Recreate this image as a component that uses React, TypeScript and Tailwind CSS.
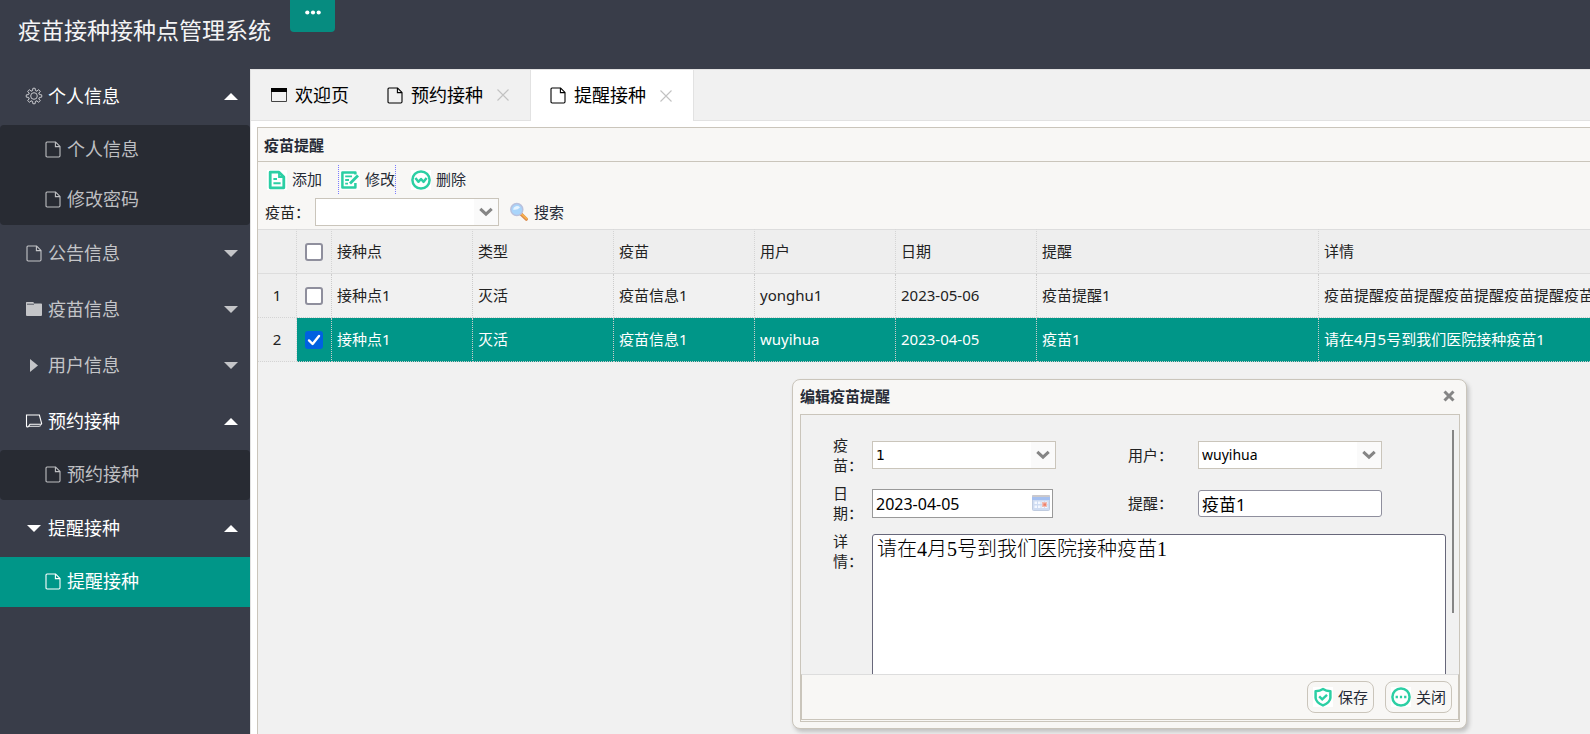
import { useState } from "react";
import type { ReactNode } from "react";

type IconProps = { className?: string };

function FileIcon({ className = "" }: IconProps) {
  return (
    <svg viewBox="0 0 16 17" className={`h-[17px] w-4 ${className}`} fill="none" stroke="currentColor" strokeWidth="1.1" aria-hidden="true">
      <path d="M1 2Q1 1 2 1H10.6L15 5.4V14.8Q15 16 13.8 16H2.2Q1 16 1 14.8Z" />
      <path d="M10.4 1V5.6H15" />
    </svg>
  );
}

function GearIcon() {
  const teeth = Array.from({ length: 8 }, (_, i) => i * 45);
  return (
    <svg viewBox="0 0 18 18" className="h-[18px] w-[18px]" fill="none" stroke="#d6d7da" strokeWidth=".9" aria-hidden="true">
      <circle cx="9" cy="9" r="3.3" />
      {teeth.map((deg) => (
        <path key={deg} d="M6.7 3.9L7.6 3.6L7.8 1.4Q9 .9 10.2 1.4L10.4 3.6L11.3 3.9" transform={`rotate(${deg} 9 9)`} />
      ))}
    </svg>
  );
}

function FolderIcon() {
  return (
    <svg viewBox="0 0 18 16" className="h-4 w-[18px]" fill="currentColor" aria-hidden="true">
      <path d="M1 1.6Q1 1 1.7 1H8Q8.6 1 8.8 1.6L9 2.4H16.2Q17 2.4 17 3.2V14Q17 15 16 15H2Q1 15 1 14Z" />
      <path d="M2 3.2H9" stroke="#393d49" strokeWidth=".8" />
    </svg>
  );
}

function ReadIcon() {
  return (
    <svg viewBox="0 0 18 16" className="h-4 w-[18px]" fill="none" stroke="currentColor" strokeWidth="1.1" aria-hidden="true">
      <path d="M1.5 13V2H14.4L16.6 10.4Q16.8 11.2 15.8 11.2H5L3.6 13.4Q1.5 14.6 1.5 13" />
      <path d="M3.8 13.4H13.8Q15.4 13.4 15.8 11.6" strokeOpacity=".7" />
    </svg>
  );
}

function Caret({ dir, className = "" }: { dir: "up" | "down" | "right"; className?: string }) {
  const shapes = { up: "M0 7L7 0L14 7Z", down: "M0 0H14L7 7Z", right: "M3 -3V10L11 3.5Z" };
  return (
    <svg viewBox="0 0 14 7" className={`h-[7px] w-[14px] overflow-visible ${className}`} fill="currentColor" aria-hidden="true">
      <path d={shapes[dir]} />
    </svg>
  );
}

function WindowIcon() {
  return (
    <svg viewBox="0 0 18 16" className="h-4 w-[18px]" aria-hidden="true">
      <path d="M1.5 1.5H16.5V14.5H1.5Z" fill="none" stroke="#444" />
      <path d="M1 1H17V5H1Z" fill="#000" />
    </svg>
  );
}

function Chevron() {
  return (
    <svg viewBox="0 0 14 10" className="h-[10px] w-[14px]" fill="none" stroke="#858585" strokeWidth="3" aria-hidden="true">
      <path d="M1.3 1.8L7 7.2L12.7 1.8" />
    </svg>
  );
}

function ActionIcon({ children }: { children: ReactNode }) {
  return (
    <svg viewBox="0 0 20 20" className="h-5 w-5 shrink-0 bg-white" fill="none" stroke="#2bcfa4" strokeWidth="2.5" aria-hidden="true">
      {children}
    </svg>
  );
}

const AddIcon = () => (
  <ActionIcon>
    <path d="M3.2 2.2H12L16.8 7V17.8H3.2Z" strokeLinejoin="round" strokeWidth="2.8" />
    <path d="M12 2.4V7H16.6" strokeWidth="1.8" />
    <path d="M6.4 9H10M6.4 13.2H13.6" strokeWidth="2" />
  </ActionIcon>
);
const EditIcon = () => (
  <ActionIcon>
    <path d="M15.4 4.6V2.4H2.4V17.6H15.4V13" strokeLinejoin="round" />
    <path d="M5.2 6.4H12M5.2 10H9M5.2 13.6H8" strokeWidth="1.8" />
    <path d="M10 13.6L18 5.6" strokeWidth="2.8" />
  </ActionIcon>
);
const DeleteIcon = () => (
  <ActionIcon>
    <circle cx="10" cy="10" r="8.6" />
    <path d="M4.4 8L7.4 11.8L10 9L12.6 11.8L15.6 8" strokeLinejoin="round" />
  </ActionIcon>
);
const SaveIcon = () => (
  <ActionIcon>
    <path d="M10 2Q13 4 17.4 4.3V11Q17 15.4 10 18.4Q3 15.4 2.6 11V4.3Q7 4 10 2Z" strokeLinejoin="round" />
    <path d="M6.2 9.4L9.2 12.4L14 7.8" strokeWidth="2.4" />
  </ActionIcon>
);
const CloseIcon = () => (
  <ActionIcon>
    <circle cx="10" cy="10" r="8.6" />
    <path d="M4.6 10H6.9M8.9 10H11.1M13.1 10H15.4" strokeWidth="2.3" />
  </ActionIcon>
);

function SearchIcon() {
  return (
    <svg viewBox="0 0 20 20" className="h-5 w-5" aria-hidden="true">
      <path d="M12 12L17.3 17.1" stroke="#d98a4e" strokeWidth="3.4" strokeLinecap="round" />
      <path d="M13 12.4L17.6 16.6" stroke="#f9b24c" strokeWidth="1.8" strokeLinecap="round" />
      <circle cx="7.8" cy="7.6" r="6" fill="#a9d5fb" stroke="#b9c1dd" strokeWidth="1.5" />
      <path d="M4 7.4A4 4 0 0 1 11 5.4Q8 8.4 4 7.4Z" fill="#e6f4ff" />
    </svg>
  );
}

function CalendarIcon() {
  return (
    <svg viewBox="0 0 18 16" className="h-4 w-[18px]" aria-hidden="true">
      <rect x=".5" y=".5" width="17" height="15" rx="1" fill="#cfdcf2" stroke="#c0cce0" />
      <path d="M0 1.5Q0 0 1.5 0H16.5Q18 0 18 1.5V5H0Z" fill="#a5c0f0" />
      <path d="M0 1.5Q0 0 1.5 0H16.5Q18 0 18 1.5V2H0Z" fill="#cbc9cc" />
      <path d="M2.5 6.5H5V9H2.5ZM6 6.5H8.5V9H6ZM9.5 6.5H12V9H9.5ZM13 6.5H15.5V9H13ZM2.5 10.5H5V13H2.5ZM6 10.5H8.5V13H6ZM9.5 10.5H12V13H9.5ZM13 10.5H15.5V13H13Z" fill="#f4f8ff" />
      <path d="M10 7H15V12H10Z" fill="#f0bcb4" />
      <path d="M11.4 8.4H14V10.8H11.4Z" fill="#ee8069" />
    </svg>
  );
}

type MenuItem = { label: string; icon: ReactNode; children?: string[] };

const menu: MenuItem[] = [
  { label: "个人信息", icon: <GearIcon />, children: ["个人信息", "修改密码"] },
  { label: "公告信息", icon: <FileIcon /> },
  { label: "疫苗信息", icon: <FolderIcon /> },
  { label: "用户信息", icon: <Caret dir="right" /> },
  { label: "预约接种", icon: <ReadIcon />, children: ["预约接种"] },
  { label: "提醒接种", icon: <Caret dir="down" />, children: ["提醒接种"] },
];

function Sidebar() {
  return (
    <nav className="w-[250px] shrink-0 bg-[#393d49] text-[18px]">
      {menu.map((item) => {
        const open = Boolean(item.children);
        return (
          <div key={item.label} className={open ? "mb-px" : ""}>
            <button
              type="button"
              aria-expanded={open}
              className={`flex h-14 w-full items-center pr-3 pb-0.5 pl-[25px] ${open ? "text-white" : "text-[#c4c5c8]"}`}
            >
              <span className="mr-[5px] flex w-[18px] justify-center">{item.icon}</span>
              {item.label}
              <Caret dir={open ? "up" : "down"} className="ml-auto" />
            </button>
            {item.children && (
              <div className="rounded-sm bg-[#282b33]">
                {item.children.map((child) => (
                  <a
                    key={child}
                    href="#"
                    className={`flex h-[50px] items-center gap-1.5 pb-0.5 pl-[45px] ${
                      child === "提醒接种" ? "bg-[#009688] text-white" : "text-[#bebfc2]"
                    }`}
                  >
                    <FileIcon />
                    {child}
                  </a>
                ))}
              </div>
            )}
          </div>
        );
      })}
    </nav>
  );
}

function TabClose() {
  return (
    <button type="button" aria-label="关闭标签" className="ml-3 p-0.5 text-[#c2c2c2]">
      <svg viewBox="0 0 12 12" className="h-3 w-3" stroke="currentColor" strokeWidth="1.1">
        <path d="M.5 .5L11.5 11.5M11.5 .5L.5 11.5" />
      </svg>
    </button>
  );
}

function Tabs() {
  return (
    <div className="flex h-13 border-t border-b border-[#e2e2e2] bg-[#f1f1f1] text-[18px] text-black">
      <div className="flex items-center gap-[7px] px-[19px]">
        <WindowIcon />
        欢迎页
      </div>
      <div className="flex items-center px-[19px]">
        <FileIcon className="mr-2" />
        预约接种
        <TabClose />
      </div>
      <div className="-mb-px flex items-center border-x border-[#e2e2e2] bg-white px-[19px]">
        <FileIcon className="mr-2" />
        提醒接种
        <TabClose />
      </div>
    </div>
  );
}

function Combo({ id, options, className = "" }: { id: string; options: string[]; className?: string }) {
  return (
    <span className="relative flex h-7 w-[184px] border border-[#cac5bb] bg-white">
      <select id={id} className={`w-full appearance-none bg-transparent pl-[3px] text-black outline-none ${className}`}>
        {options.map((o) => (
          <option key={o}>{o}</option>
        ))}
      </select>
      <span className="pointer-events-none absolute inset-y-0 right-0 flex w-6 items-center justify-center bg-[#fafafa]">
        <Chevron />
      </span>
    </span>
  );
}

const columns = ["接种点", "类型", "疫苗", "用户", "日期", "提醒", "详情"];
const rows = [
  ["接种点1", "灭活", "疫苗信息1", "yonghu1", "2023-05-06", "疫苗提醒1", "疫苗提醒疫苗提醒疫苗提醒疫苗提醒疫苗提醒疫苗提醒"],
  ["接种点1", "灭活", "疫苗信息1", "wuyihua", "2023-04-05", "疫苗1", "请在4月5号到我们医院接种疫苗1"],
];

function Tick({ label, checked, onChange }: { label: string; checked: boolean; onChange: () => void }) {
  return (
    <span className="relative mx-auto flex h-[18px] w-[18px]">
      <input
        type="checkbox"
        aria-label={label}
        checked={checked}
        onChange={onChange}
        className="h-[18px] w-[18px] appearance-none rounded-[3px] border-2 border-[#8f8f9d] bg-white checked:border-[#0061e0] checked:bg-[#0061e0]"
      />
      {checked && (
        <svg viewBox="0 0 18 18" className="pointer-events-none absolute inset-0 h-[18px] w-[18px]" fill="none" stroke="#fff" strokeWidth="2.4">
          <path d="M4 9.4L7.6 13L14 5" strokeLinecap="round" strokeLinejoin="round" />
        </svg>
      )}
    </span>
  );
}

function DataTable() {
  const [picked, setPicked] = useState<number[]>([1]);
  const toggle = (i: number) => setPicked((p) => (p.includes(i) ? p.filter((n) => n !== i) : [...p, i]));
  const all = picked.length === rows.length;
  return (
    <table className="w-full table-fixed border-separate border-spacing-0 text-[15px] text-[#222]">
      <colgroup>
        <col className="w-[39px]" />
        <col className="w-[35px]" />
        <col className="w-[141px]" />
        <col className="w-[141px]" />
        <col className="w-[141px]" />
        <col className="w-[141px]" />
        <col className="w-[141px]" />
        <col className="w-[282px]" />
        <col />
      </colgroup>
      <thead>
        <tr className="h-[45px] bg-[#eeeeee]">
          <th className="border-y border-y-[#dddddd] border-r border-r-[#d4d4d4] [border-right-style:dotted]" />
          <th className="border-y border-y-[#dddddd] border-r border-r-[#d4d4d4] p-0 [border-right-style:dotted]">
            <Tick label="全选" checked={all} onChange={() => setPicked(all ? [] : rows.map((_, i) => i))} />
          </th>
          {columns.map((c) => (
            <th
              key={c}
              className="border-y border-y-[#dddddd] border-r border-r-[#d4d4d4] px-[5px] text-left font-normal [border-right-style:dotted] last:border-r-0"
            >
              {c}
            </th>
          ))}
        </tr>
      </thead>
      <tbody>
        {rows.map((row, i) => (
          <tr key={i} className={`h-11 ${picked.includes(i) ? "bg-[#009688] text-white" : ""}`}>
            <td className="border-r border-b border-dotted border-[#d4d4d4] bg-[#eeeeee] text-center text-[#222]">{i + 1}</td>
            <td className="border-r border-b border-dotted border-[#cccccc] p-0">
              <Tick label={`选择第${i + 1}行`} checked={picked.includes(i)} onChange={() => toggle(i)} />
            </td>
            {row.map((cell, j) => (
              <td
                key={j}
                className="overflow-hidden border-r border-b border-dotted border-[#cccccc] px-[5px] whitespace-nowrap last:border-r-0 last:pr-0"
              >
                {cell}
              </td>
            ))}
          </tr>
        ))}
      </tbody>
    </table>
  );
}

const toolButton = "flex h-[29px] items-center gap-[5px] text-[#262b36]";

function Panel() {
  return (
    <section className="flex grow flex-col border-t border-l border-[#cac5bb] bg-[#f1f1f1]">
      <h2 className="flex h-[34px] items-center border-b border-[#cac5bb] bg-[#f8f7f5] pt-px pl-1.5 text-[15px] font-bold text-[#262b36]">
        疫苗提醒
      </h2>
      <div className="h-[67px] bg-[#f8f7f5] text-[15px]">
        <div className="flex items-center pt-[3px] pl-[9px]">
          <button type="button" className={toolButton}>
            <AddIcon />
            添加
          </button>
          <button type="button" className={`${toolButton} ml-4 border-x border-dotted border-[#7b7bff] pl-px`}>
            <EditIcon />
            修改
          </button>
          <button type="button" className={`${toolButton} ml-[15px]`}>
            <DeleteIcon />
            删除
          </button>
        </div>
        <div className="flex h-9 items-center pl-[7px]">
          <label htmlFor="vaccineFilter" className="w-[50px] text-[#222]">
            疫苗：
          </label>
          <Combo id="vaccineFilter" options={[""]} />
          <button type="button" className={`${toolButton} ml-2.5`}>
            <SearchIcon />
            搜索
          </button>
        </div>
      </div>
      <DataTable />
    </section>
  );
}

const dialogButton =
  "flex h-8 items-center gap-[5px] rounded-lg border border-[#cac5bb] bg-[#f8f7f5] px-[5px] text-[15px] text-[#262b36]";

function EditDialog() {
  return (
    <div
      role="dialog"
      aria-labelledby="dialogTitle"
      className="absolute top-[379px] left-[792px] w-[675px] rounded-lg border border-[#cac5bb] bg-[#f8f7f5] pr-1.5 pb-1.5 pl-[7px] shadow-[2px_3px_4px_#c0c0c0]"
    >
      <div className="flex h-[34px] items-center justify-between pr-[3px] pb-0.5">
        <h2 id="dialogTitle" className="text-[15px] font-bold text-[#262b36]">
          编辑疫苗提醒
        </h2>
        <button type="button" aria-label="关闭窗口" className="p-0.5">
          <svg viewBox="0 0 12 12" className="h-3 w-3" stroke="#858585" strokeWidth="3">
            <path d="M1.5 1.5L10.5 10.5M10.5 1.5L1.5 10.5" />
          </svg>
        </button>
      </div>
      <div className="border border-[#cac5bb]">
        <form className="relative h-[259px] overflow-hidden bg-[#f1f1f1] pt-5 pr-[13px] pl-8">
          <div className="grid grid-cols-[39px_256px_70px_1fr] items-center gap-y-2 text-[15px] leading-5 text-[#222]">
            <label htmlFor="vaccine" className="w-[30px]">
              疫苗：
            </label>
            <Combo id="vaccine" options={["1"]} className="font-['DejaVu_Sans'] text-[14px]" />
            <label htmlFor="user">用户：</label>
            <Combo id="user" options={["wuyihua"]} className="text-[14px]" />
            <label htmlFor="date" className="w-[30px]">
              日期：
            </label>
            <span className="relative flex h-[29px] w-[181px] border border-[#999999] bg-white">
              <input id="date" defaultValue="2023-04-05" className="w-full pt-0.5 pl-[3px] text-[16px] text-black outline-none" />
              <span className="pointer-events-none absolute inset-y-0 right-0.5 flex items-center">
                <CalendarIcon />
              </span>
            </span>
            <label htmlFor="remind">提醒：</label>
            <input
              id="remind"
              defaultValue="疫苗1"
              className="h-[27px] w-[184px] rounded-[3px] border border-[#8f8f9d] bg-white pl-[3px] text-[17px] text-black outline-none"
            />
            <label htmlFor="detail" className="w-[30px] self-start">
              详情：
            </label>
            <textarea
              id="detail"
              defaultValue="请在4月5号到我们医院接种疫苗1"
              className="col-span-3 mt-[3px] h-[190px] resize-none rounded-[3px] border border-[#67677a] bg-white px-1 font-['Liberation_Serif','Noto_Sans_CJK_SC',serif] text-[20px] leading-7 font-light text-black outline-none"
            />
          </div>
          <span className="absolute top-[15px] right-[5px] h-[183px] w-0.5 bg-[#858585]" />
        </form>
        <div className="mb-px flex h-[46px] items-center justify-end gap-[11px] border border-t-[#dddddd] border-r-[#cac5bb] border-b-[#cac5bb] border-l-[#cac5bb] pr-1.5">
          <button type="button" className={dialogButton}>
            <SaveIcon />
            保存
          </button>
          <button type="button" className={dialogButton}>
            <CloseIcon />
            关闭
          </button>
        </div>
      </div>
    </div>
  );
}

export default function App() {
  return (
    <div className="relative flex h-screen flex-col overflow-hidden bg-white font-['Noto_Sans','Noto_Sans_CJK_SC',sans-serif]">
      <header className="flex h-[69px] shrink-0 items-start bg-[#393d49]">
        <h1 className="w-[290px] pt-3 pl-[18px] text-[23px] leading-9 whitespace-nowrap text-[#f4f4f5]">疫苗接种接种点管理系统</h1>
        <button type="button" aria-label="菜单" className="flex h-8 w-[45px] justify-center rounded-b-sm bg-[#068c80] pt-2.5">
          <svg viewBox="0 0 16 5" className="h-[5px] w-4" fill="#fff">
            <circle cx="2.3" cy="2.5" r="2.1" />
            <circle cx="8" cy="2.5" r="2.1" />
            <circle cx="13.7" cy="2.5" r="2.1" />
          </svg>
        </button>
      </header>
      <div className="flex min-h-0 grow">
        <Sidebar />
        <main className="flex min-w-0 grow flex-col border-l border-[#e2e2e2]">
          <Tabs />
          <div className="flex grow flex-col pt-1.5 pl-1.5">
            <Panel />
          </div>
        </main>
      </div>
      <EditDialog />
    </div>
  );
}
